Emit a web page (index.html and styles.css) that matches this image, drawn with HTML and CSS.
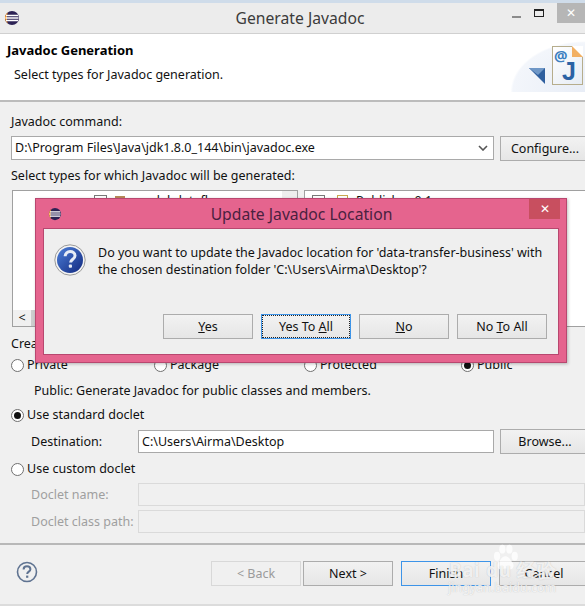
FILE: index.html
```html
<!DOCTYPE html>
<html lang="en">
  <head>
    <meta charset="UTF-8" />
    <title>Generate Javadoc</title>
    <link rel="stylesheet" href="styles.css">
  </head>
  <body>
    <div class="desktop-strip"></div>
    <div class="window">
      <div class="titlebar">
        <svg class="eclipse-icon" width="16" height="16" viewBox="0 0 16 16">
          <circle cx="8" cy="8" r="7" fill="#2c2255" />
          <path d="M1 8a7 7 0 0 1 3-5.7A8 8 0 0 0 3 8a8 8 0 0 0 1 5.7A7 7 0 0 1 1 8z" fill="#f7941e" />
          <path d="M2 5.5h12M1.5 8h13M2 10.5h12" stroke="#fff" stroke-width="1.3" />
        </svg>
        <span class="title">Generate Javadoc</span>
        <div class="win-controls">
          <span class="win-min"></span>
          <span class="win-max"></span>
          <span class="win-close">✕</span>
        </div>
      </div>

      <div class="banner">
        <div>
          <h1>Javadoc Generation</h1>
          <p class="banner-sub">Select types for Javadoc generation.</p>
        </div>
        <div class="banner-art">
          <svg class="banner-arrow" width="17" height="17" viewBox="0 0 17 17">
            <path d="M0 1h16v16z" fill="#2f5f9e" />
            <path d="M0 1h16L9 8z" fill="#6f97c6" />
          </svg>
          <div class="jdoc-page">
            <span class="jdoc-at">@</span>
            <span class="jdoc-j">J</span>
            <span class="jdoc-fold"></span>
          </div>
        </div>
      </div>

      <div class="content">
        <label class="field-label">Javadoc command:</label>
        <div class="row command-row">
          <div class="input combo">
            <span>D:\Program Files\Java\jdk1.8.0_144\bin\javadoc.exe</span>
            <svg width="10" height="6" viewBox="0 0 10 6"><path d="M1 1l4 4 4-4" fill="none" stroke="#555" stroke-width="1.6" /></svg>
          </div>
          <button class="btn side-btn">Configure...</button>
        </div>

        <label class="field-label types-label">Select types for which Javadoc will be generated:</label>
        <div class="lists">
          <div class="list">
            <div class="list-item left-item">
              <span class="check"></span>
              <span class="pkg-icon"></span>
              <span>model-dataflow</span>
            </div>
            <div class="scroll-up"></div>
            <div class="scroll-left"><span>&lt;</span></div>
          </div>
          <div class="list">
            <div class="list-item right-item">
              <span class="check"></span>
              <span class="file-icon"></span>
              <span>Publisher 0.1</span>
            </div>
          </div>
        </div>

        <label class="field-label create-label">Create Javadoc for members with visibility:</label>
        <div class="visibility">
          <div class="radio-line"><span class="radio"></span>Private</div>
          <div class="radio-line"><span class="radio"></span>Package</div>
          <div class="radio-line"><span class="radio"></span>Protected</div>
          <div class="radio-line"><span class="radio checked"></span>Public</div>
        </div>
        <p class="visibility-note">Public: Generate Javadoc for public classes and members.</p>

        <div class="radio-line standard-line"><span class="radio checked"></span>Use standard doclet</div>
        <div class="row dest-row">
          <label class="indent-label">Destination:</label>
          <div class="input dest-input">C:\Users\Airma\Desktop</div>
          <button class="btn side-btn">Browse...</button>
        </div>
        <div class="radio-line custom-line"><span class="radio"></span>Use custom doclet</div>
        <div class="row doclet-row">
          <label class="indent-label disabled">Doclet name:</label>
          <div class="input disabled-input"></div>
        </div>
        <div class="row doclet-row path-row">
          <label class="indent-label disabled">Doclet class path:</label>
          <div class="input disabled-input"></div>
        </div>
      </div>

      <div class="footer">
        <svg class="help-icon" width="22" height="22" viewBox="0 0 22 22">
          <circle cx="11" cy="11" r="9.5" fill="none" stroke="#5f7391" stroke-width="1.6" />
          <path d="M7.6 8.4c0-2 1.5-3.1 3.4-3.1s3.4 1.1 3.4 2.9c0 2.4-3.2 2.4-3.2 4.8" fill="none" stroke="#5f7391" stroke-width="2" />
          <rect x="10.1" y="14.6" width="2.2" height="2.2" fill="#5f7391" />
        </svg>
        <div class="footer-btns">
          <button class="btn disabled-btn">&lt; Back</button>
          <button class="btn next-btn">Next &gt;</button>
          <button class="btn default-btn">Finish</button>
          <button class="btn">Cancel</button>
        </div>
      </div>
    </div>

    <div class="dialog">
      <div class="dialog-title">
        <svg class="eclipse-icon" width="14" height="14" viewBox="0 0 16 16">
          <circle cx="8" cy="8" r="7" fill="#2c2255" />
          <path d="M1 8a7 7 0 0 1 3-5.7A8 8 0 0 0 3 8a8 8 0 0 0 1 5.7A7 7 0 0 1 1 8z" fill="#f7941e" />
          <path d="M2 5.5h12M1.5 8h13M2 10.5h12" stroke="#fff" stroke-width="1.3" />
        </svg>
        <span class="dialog-caption">Update Javadoc Location</span>
        <span class="dialog-close">✕</span>
      </div>
      <div class="dialog-body">
        <div class="dialog-msg">
          <svg width="32" height="32" viewBox="0 0 32 32">
            <defs>
              <linearGradient id="qfill" x1="0" y1="0" x2="1" y2="1">
                <stop offset="0" stop-color="#4d7fd8" />
                <stop offset="1" stop-color="#12297f" />
              </linearGradient>
            </defs>
            <circle cx="16" cy="16" r="15.2" fill="#f4f4f4" stroke="#9a9a9a" stroke-width="1" />
            <circle cx="16" cy="16" r="13" fill="url(#qfill)" />
            <path d="M11.2 12.2c0-3 2.2-4.6 4.9-4.6s4.9 1.5 4.9 4.1c0 3.6-4.4 3.5-4.4 6.9" fill="none" stroke="#e8edf6" stroke-width="3" />
            <rect x="14.8" y="20.4" width="3.2" height="3.4" rx="1" fill="#e8edf6" />
          </svg>
          <p>Do you want to update the Javadoc location for 'data-transfer-business' with<br />the chosen destination folder 'C:\Users\Airma\Desktop'?</p>
        </div>
        <div class="dialog-btns">
          <button class="btn"><u>Y</u>es</button>
          <button class="btn focus-btn">Yes To <u>A</u>ll</button>
          <button class="btn"><u>N</u>o</button>
          <button class="btn">No <u>T</u>o All</button>
        </div>
      </div>
    </div>

    <div class="watermark">
      <svg width="32" height="30" viewBox="0 0 34 34">
        <ellipse cx="8" cy="15" rx="3.5" ry="5" />
        <ellipse cx="14" cy="7" rx="3.5" ry="5" />
        <ellipse cx="22" cy="7" rx="3.5" ry="5" />
        <ellipse cx="28" cy="15" rx="3.5" ry="5" />
        <path d="M17.5 15c4 0 5 4 8 7 3 4 0 9-4 8-2-.5-3-1-4-1s-2 .5-4 1c-4 1-7-4-4-8 3-3 4-7 8-7z" />
      </svg>
      <div class="wm-main">Bai<span class="wm-du">du</span> 经验</div>
      <div class="wm-url">jingyan.baidu.com</div>
    </div>
  </body>
</html>
```

FILE: styles.css
```css
* {
  margin: 0;
  padding: 0;
  box-sizing: border-box;
}

html,
body {
  width: 585px;
  height: 606px;
  overflow: hidden;
}

body {
  position: relative;
  background: #f0f0f0;
  color: #111;
  font-family: "Noto Sans", "Open Sans", sans-serif;
  font-size: 12.5px;
  line-height: 16px;
}

.desktop-strip {
  height: 3px;
  background: #cfdcea;
}

.window {
  height: 603px;
  border-bottom: 2px solid #dcdcdc;
  display: flex;
  flex-direction: column;
}

.titlebar {
  height: 30px;
  background: #ececec;
  display: flex;
  align-items: center;
  padding-left: 4px;
  position: relative;
}

.title {
  flex: 1;
  text-align: center;
  font-size: 15.7px;
  color: #3b3b3b;
  padding-right: 5px;
}

.eclipse-icon {
  flex: none;
}

.win-controls {
  position: absolute;
  top: 0;
  right: 0;
  display: flex;
  height: 20px;
  align-items: flex-start;
}

.win-min {
  width: 9px;
  height: 2px;
  background: #8b8b8b;
  margin: 13px 13px 0 0;
}

.win-max {
  width: 10px;
  height: 8px;
  border: 1px solid #222;
  border-top-width: 2px;
  margin: 6px 13px 0 0;
}

.win-close {
  width: 28px;
  height: 20px;
  background: #b6b6b6;
  color: #fff;
  font-size: 12px;
  line-height: 20px;
  text-align: center;
}

.banner {
  height: 69px;
  background: #fff;
  border-top: 1px solid #d0d0d0;
  border-bottom: 2px solid #bcbcbc;
  padding: 8px 0 0 7px;
  display: flex;
  justify-content: space-between;
}

.banner h1 {
  font-size: 13px;
  font-weight: 700;
  color: #000;
}

.banner-sub {
  margin: 9px 0 0 7px;
}

.banner-art {
  width: 85px;
  height: 58px;
  margin-top: -8px;
  padding: 12px 0 0 29px;
  display: flex;
  align-items: flex-start;
  background: radial-gradient(ellipse at 100% 100%, #e8edf6 0, #f3f6fb 60%, #fff 62%);
}

.banner-arrow {
  margin-top: 21px;
  flex: none;
}

.jdoc-page {
  position: relative;
  width: 31px;
  height: 39px;
  margin-left: 6px;
  background: linear-gradient(135deg, #fff, #e6ecf4);
  border: 1px solid #b6ad8c;
  flex: none;
}

.jdoc-at {
  position: absolute;
  top: 0;
  left: 1px;
  font-size: 15px;
  font-weight: 700;
  color: #3c7fc0;
}

.jdoc-j {
  position: absolute;
  left: 9px;
  top: 11px;
  font-size: 25px;
  line-height: 26px;
  font-weight: 700;
  color: #2a62a4;
  font-family: "Liberation Sans", sans-serif;
}

.jdoc-fold {
  position: absolute;
  top: -1px;
  right: -1px;
  border-style: solid;
  border-width: 11px 0 0 11px;
  border-color: #fff transparent transparent #f2b063;
}

.content {
  flex: 1;
  padding: 12px 0 0 11px;
  border-bottom: 2px solid #b8b8b8;
}

.row {
  display: flex;
}

.input {
  background: #fff;
  border: 1px solid #a9a9a9;
  display: flex;
  align-items: center;
  padding-left: 3px;
}

.combo {
  width: 483px;
  height: 24px;
  justify-content: space-between;
  padding-right: 5px;
  flex: none;
}

.btn {
  width: 90px;
  height: 25px;
  border: 1px solid #acacac;
  background: linear-gradient(#f2f2f2, #e6e6e6);
  font: inherit;
  color: #111;
  flex: none;
}

.command-row {
  margin-top: 6px;
  gap: 6px;
}

.side-btn {
  width: 90px;
}

.field-label {
  display: block;
}

.types-label {
  margin-top: 7px;
}

.lists {
  margin: 6px 0 0 1px;
  height: 137px;
  display: flex;
  gap: 6px;
}

.list {
  width: 286px;
  background: #fff;
  border: 1px solid #a0a0a0;
  position: relative;
  flex: none;
}

.list-item {
  position: absolute;
  top: 2px;
  display: flex;
  align-items: center;
  gap: 8px;
}

.left-item {
  left: 81px;
}

.right-item {
  left: 7px;
}

.check {
  width: 13px;
  height: 13px;
  border: 1px solid #777;
  background: #fff;
}

.pkg-icon {
  width: 10px;
  height: 10px;
  background: #b8895a;
}

.file-icon {
  width: 11px;
  height: 12px;
  border: 1px solid #c9a74e;
  background: #fff;
  margin-left: 4px;
}

.scroll-up {
  position: absolute;
  top: 0;
  right: 0;
  width: 15px;
  height: 18px;
  background: #eee;
}

.scroll-left {
  position: absolute;
  left: 0;
  bottom: 0;
  width: 18px;
  height: 16px;
  background: #f0f0f0;
  text-align: center;
}

.scroll-left::after {
  content: "";
  position: absolute;
  left: 18px;
  bottom: 0;
  width: 12px;
  height: 16px;
  background: #cdcdcd;
}

.create-label {
  margin-top: 9px;
}

.visibility {
  margin-top: 5px;
  display: grid;
  grid-template-columns: 143px 150px 157px auto;
}

.radio-line {
  display: flex;
  align-items: center;
  gap: 3px;
}

.radio {
  width: 13px;
  height: 13px;
  border: 1px solid #707070;
  border-radius: 50%;
  background: #fff;
  flex: none;
  position: relative;
}

.checked::after {
  content: "";
  position: absolute;
  left: 2px;
  top: 2px;
  width: 7px;
  height: 7px;
  border-radius: 50%;
  background: #111;
}

.visibility-note {
  margin: 10px 0 0 23px;
}

.standard-line {
  margin-top: 8px;
}

.dest-row {
  margin-top: 6px;
  align-items: center;
  gap: 6px;
}

.indent-label {
  width: 107px;
  margin-left: 20px;
  flex: none;
}

.dest-row .indent-label {
  margin-right: -6px;
}

.dest-input {
  width: 356px;
  height: 23px;
  flex: none;
}

.custom-line {
  margin-top: 7px;
}

.doclet-row {
  margin-top: 6px;
  align-items: center;
}

.path-row {
  margin-top: 4px;
}

.disabled {
  color: #9f9f9f;
}

.disabled-input {
  flex: 1;
  height: 23px;
  background: #f0f0f0;
  border-color: #dadada;
}

.footer {
  height: 59px;
  padding: 16px 0 0 16px;
  display: flex;
  justify-content: space-between;
  align-items: flex-start;
}

.help-icon {
  flex: none;
}

.footer-btns {
  display: flex;
  width: 374px;
  flex: none;
  gap: 8px;
}

.disabled-btn {
  color: #9b9b9b;
  background: #f0f0f0;
  border-color: #d8d8d8;
  margin-right: -6px;
}

.default-btn {
  border-color: #3d94e8;
}

.dialog {
  position: absolute;
  left: 35px;
  top: 198px;
  width: 532px;
  height: 165px;
  background: #e5648e;
  border: 1px solid #b8476f;
  box-shadow: 1px 1px 3px rgba(0, 0, 0, 0.25);
  padding: 0 7px 7px;
  display: flex;
  flex-direction: column;
}

.dialog-title {
  height: 29px;
  display: flex;
  align-items: center;
  padding-left: 5px;
  position: relative;
}

.dialog-caption {
  flex: 1;
  text-align: center;
  font-size: 15.7px;
  color: #4a2140;
  padding-right: 18px;
}

.dialog-close {
  position: absolute;
  top: 0;
  right: -1px;
  width: 31px;
  height: 20px;
  background: #c84f5f;
  color: #fff;
  font-size: 12px;
  line-height: 20px;
  text-align: center;
}

.dialog-body {
  flex: 1;
  background: #efefef;
  border: 1px solid #b8476f;
  display: flex;
  flex-direction: column;
  justify-content: space-between;
  padding: 15px 11px 15px 10px;
}

.dialog-msg {
  display: flex;
  gap: 12px;
  align-items: flex-start;
}

.dialog-msg p {
  line-height: 17px;
}

.dialog-btns {
  display: flex;
  justify-content: flex-end;
  gap: 8px;
}

.focus-btn {
  border-color: #3d94e8;
  outline: 1px dotted #222;
  outline-offset: -2px;
}

.watermark {
  position: absolute;
  left: 447px;
  top: 540px;
  width: 125px;
  height: 62px;
  color: rgba(255, 255, 255, 0.8);
  fill: rgba(255, 255, 255, 0.8);
  text-shadow: 0 0 1px rgba(150, 150, 150, 0.6);
}

.watermark svg {
  position: absolute;
  left: 42px;
  top: 3px;
}

.wm-main {
  position: absolute;
  top: 20px;
  left: 2px;
  font-size: 19px;
  font-weight: 700;
  line-height: 20px;
  white-space: nowrap;
  letter-spacing: 0.5px;
}

.wm-du {
  margin-left: 6px;
}

.wm-url {
  position: absolute;
  top: 41px;
  left: 1px;
  font-size: 12.5px;
  line-height: 14px;
}
```
